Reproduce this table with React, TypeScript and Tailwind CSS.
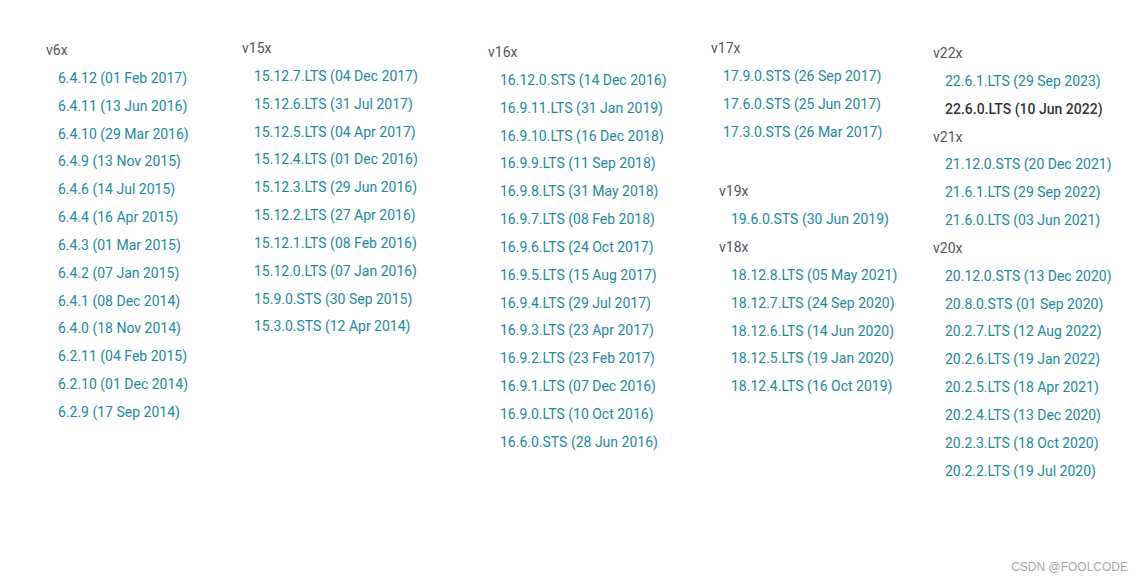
import React from "react"

type Group = { name: string; items: { label: string; current?: boolean }[]; className?: string }

const g = (name: string, labels: string[], className = "", current = ""): Group => ({
  name,
  className,
  items: labels.map(label => ({ label, current: label === current })),
})

const columns: { className: string; groups: Group[] }[] = [
  {
    className: "w-[196px] pt-[37px]",
    groups: [
      g("v6x", [
        "6.4.12 (01 Feb 2017)", "6.4.11 (13 Jun 2016)", "6.4.10 (29 Mar 2016)", "6.4.9 (13 Nov 2015)",
        "6.4.6 (14 Jul 2015)", "6.4.4 (16 Apr 2015)", "6.4.3 (01 Mar 2015)", "6.4.2 (07 Jan 2015)",
        "6.4.1 (08 Dec 2014)", "6.4.0 (18 Nov 2014)", "6.2.11 (04 Feb 2015)", "6.2.10 (01 Dec 2014)",
        "6.2.9 (17 Sep 2014)",
      ]),
    ],
  },
  {
    className: "w-[246px] pt-[35px]",
    groups: [
      g("v15x", [
        "15.12.7.LTS (04 Dec 2017)", "15.12.6.LTS (31 Jul 2017)", "15.12.5.LTS (04 Apr 2017)",
        "15.12.4.LTS (01 Dec 2016)", "15.12.3.LTS (29 Jun 2016)", "15.12.2.LTS (27 Apr 2016)",
        "15.12.1.LTS (08 Feb 2016)", "15.12.0.LTS (07 Jan 2016)", "15.9.0.STS (30 Sep 2015)",
        "15.3.0.STS (12 Apr 2014)",
      ]),
    ],
  },
  {
    className: "w-[223px] pt-[39px]",
    groups: [
      g("v16x", [
        "16.12.0.STS (14 Dec 2016)", "16.9.11.LTS (31 Jan 2019)", "16.9.10.LTS (16 Dec 2018)",
        "16.9.9.LTS (11 Sep 2018)", "16.9.8.LTS (31 May 2018)", "16.9.7.LTS (08 Feb 2018)",
        "16.9.6.LTS (24 Oct 2017)", "16.9.5.LTS (15 Aug 2017)", "16.9.4.LTS (29 Jul 2017)",
        "16.9.3.LTS (23 Apr 2017)", "16.9.2.LTS (23 Feb 2017)", "16.9.1.LTS (07 Dec 2016)",
        "16.9.0.LTS (10 Oct 2016)", "16.6.0.STS (28 Jun 2016)",
      ]),
    ],
  },
  {
    className: "w-[222px] pt-[35px]",
    groups: [
      g("v17x", ["17.9.0.STS (26 Sep 2017)", "17.6.0.STS (25 Jun 2017)", "17.3.0.STS (26 Mar 2017)"]),
      g("v19x", ["19.6.0.STS (30 Jun 2019)"], "ml-2 mt-[32px]"),
      g("v18x", [
        "18.12.8.LTS (05 May 2021)", "18.12.7.LTS (24 Sep 2020)", "18.12.6.LTS (14 Jun 2020)",
        "18.12.5.LTS (19 Jan 2020)", "18.12.4.LTS (16 Oct 2019)",
      ], "ml-2"),
    ],
  },
  {
    className: "flex-1 pt-[40px]",
    groups: [
      g("v22x", ["22.6.1.LTS (29 Sep 2023)", "22.6.0.LTS (10 Jun 2022)"], "", "22.6.0.LTS (10 Jun 2022)"),
      g("v21x", ["21.12.0.STS (20 Dec 2021)", "21.6.1.LTS (29 Sep 2022)", "21.6.0.LTS (03 Jun 2021)"]),
      g("v20x", [
        "20.12.0.STS (13 Dec 2020)", "20.8.0.STS (01 Sep 2020)", "20.2.7.LTS (12 Aug 2022)",
        "20.2.6.LTS (19 Jan 2022)", "20.2.5.LTS (18 Apr 2021)", "20.2.4.LTS (13 Dec 2020)",
        "20.2.3.LTS (18 Oct 2020)", "20.2.2.LTS (19 Jul 2020)",
      ]),
    ],
  },
]

export default function App() {
  return (
    <div className="relative w-[1144px] h-[583px] bg-white overflow-hidden font-['Roboto',sans-serif] text-[14px] leading-[27.85px]">
      <div className="flex pl-[46px]">
        {columns.map((col, i) => (
          <div key={i} className={col.className}>
            {col.groups.map(grp => (
              <div key={grp.name} className={grp.className}>
                <div className="text-[#555555]">{grp.name}</div>
                <ul className="pl-3">
                  {grp.items.map(it => (
                    <li key={it.label}>
                      <a className={it.current ? "font-medium text-[#333333]" : "text-[#1c8a9c] cursor-pointer"}>
                        {it.label}
                      </a>
                    </li>
                  ))}
                </ul>
              </div>
            ))}
          </div>
        ))}
      </div>
      <div className="absolute right-[16px] bottom-[10px] font-['Liberation_Sans',sans-serif] text-[12px] leading-none text-[#a8a8a8]">
        CSDN @FOOLCODE
      </div>
    </div>
  )
}
